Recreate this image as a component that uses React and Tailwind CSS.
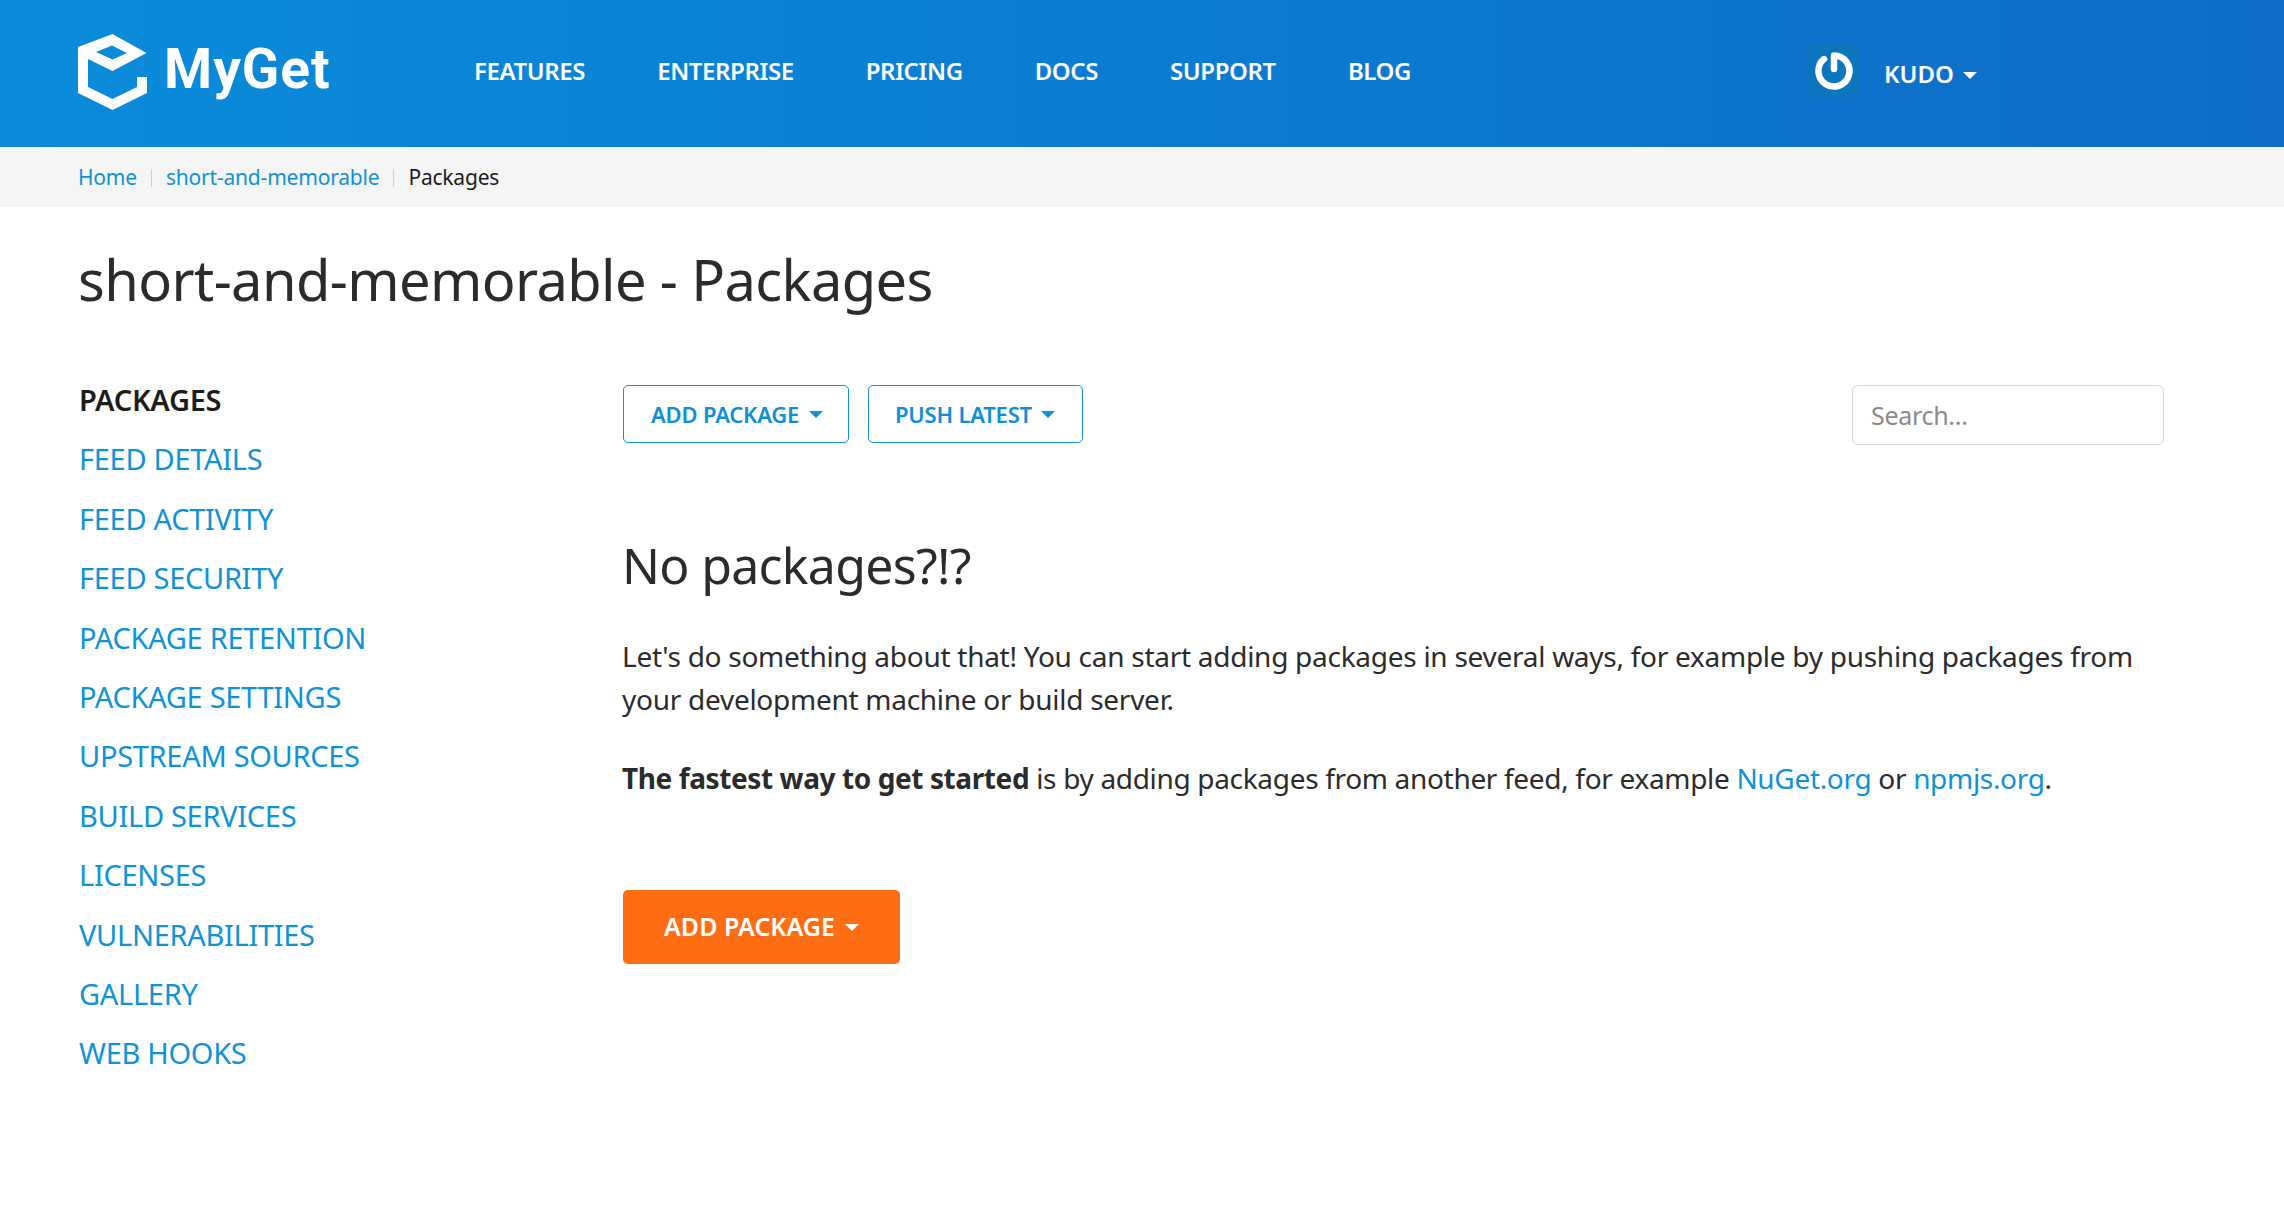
const font = { fontFamily: '"Noto Sans", sans-serif' };

const navItems = ['FEATURES', 'ENTERPRISE', 'PRICING', 'DOCS', 'SUPPORT', 'BLOG'];
const sideItems = [
  'FEED DETAILS',
  'FEED ACTIVITY',
  'FEED SECURITY',
  'PACKAGE RETENTION',
  'PACKAGE SETTINGS',
  'UPSTREAM SOURCES',
  'BUILD SERVICES',
  'LICENSES',
  'VULNERABILITIES',
  'GALLERY',
  'WEB HOOKS',
];

function Caret({ className }) {
  return <span className={`inline-block w-0 h-0 border-x-[7px] border-x-transparent border-t-[7px] ${className}`} />;
}

function Logo() {
  return (
    <svg width="70" height="77" viewBox="78 34 70 77" className="shrink-0">
      <path
        fill="#fff"
        fillRule="evenodd"
        d="M78 47 L112.5 34 L146.5 53 L112.5 71 L88 59 L88 87 L112.5 99 L137 87 L137 77 L147 77 L147 93 L112.5 110 L78 93 Z M96 52 L112.5 59.500 L127 53 L112 45.500 Z"
      />
    </svg>
  );
}

export default function App() {
  return (
    <div style={font} className="min-h-[1208px] bg-white text-[#2b2b2b]">
      <header className="h-[147px] bg-gradient-to-r from-[#0a8cda] to-[#0e6cc8] flex items-center pl-[78px]">
        <div className="flex items-center gap-[16px] w-[396px] -mt-[2px]">
          <Logo />
          <span style={{ fontFamily: 'Roboto, sans-serif' }} className="text-[55px] leading-none font-bold text-white tracking-[1px] -mt-[6px]">MyGet</span>
        </div>
        <nav className="flex items-center gap-[72px] -mt-[6px] w-[1333px]">
          {navItems.map((item) => (
            <a key={item} className="text-[24px] font-semibold text-white tracking-[-0.4px]">{item}</a>
          ))}
        </nav>
        <div className="flex items-center gap-[24px]">
          <div className="w-[53px] h-[53px] rounded-[6px] bg-[#0c76bd] flex items-center justify-center -mt-[6px]">
            <svg width="42" height="42" viewBox="0 0 42 42" fill="none" stroke="#fff" strokeWidth="6.500" strokeLinecap="round" strokeLinejoin="round">
              <path d="M11 9.100 A15.500 15.500 0 1 0 21 5.500 V19" />
            </svg>
          </div>
          <div className="flex items-center gap-[9px] text-[24px] font-semibold text-white">
            KUDO
            <Caret className="border-t-white mt-[4px]" />
          </div>
        </div>
      </header>

      <div className="h-[60px] pt-[2px] bg-[#f5f5f5] flex items-center pl-[78px] text-[21px] tracking-[-0.2px] text-[#1c1c1c]">
        <a className="text-[#0f93d6]">Home</a>
        <span className="w-px h-[18px] bg-[#cfcfcf] mx-[14px]" />
        <a className="text-[#0f93d6]">short-and-memorable</a>
        <span className="w-px h-[18px] bg-[#cfcfcf] mx-[14px]" />
        <span>Packages</span>
      </div>

      <h1 className="pl-[78px] mt-[36px] text-[56px] leading-[72px] font-normal tracking-[-0.6px]">short-and-memorable - Packages</h1>

      <div className="flex pl-[79px] pr-[120px] mt-[70px]">
        <aside className="w-[544px] shrink-0 flex flex-col text-[29px] leading-[59.400px] tracking-[-0.3px] -mt-[15px]">
          <span className="font-semibold text-[#1c1c1c]">PACKAGES</span>
          {sideItems.map((item) => (
            <a key={item} className="text-[#0f93d6]">{item}</a>
          ))}
        </aside>

        <main className="flex-1 min-w-0">
          <div className="flex items-start">
            <button className="h-[58px] pl-[27px] w-[226px] flex items-center gap-[10px] whitespace-nowrap border border-[#1590d0] rounded-[5px] text-[22px] font-semibold text-[#0f8fd4] tracking-[-0.2px]">
              ADD PACKAGE
              <Caret className="border-t-[#0f8fd4]" />
            </button>
            <button className="h-[58px] ml-[19px] pl-[26px] w-[215px] flex items-center gap-[9px] whitespace-nowrap border border-[#1590d0] rounded-[5px] text-[22px] font-semibold text-[#0f8fd4] tracking-[-0.2px]">
              PUSH LATEST
              <Caret className="border-t-[#0f8fd4]" />
            </button>
            <input
              placeholder="Search..."
              style={font}
              className="ml-auto w-[312px] h-[60px] px-[18px] border border-[#d6d6d6] rounded-[6px] text-[25px] tracking-[-0.3px] placeholder:text-[#8a8a8a]"
            />
          </div>

          <h2 className="mt-[88px] -ml-[1px] text-[50px] leading-[64px] font-normal tracking-[-0.7px]">No packages?!?</h2>
          <p className="mt-[38px] -ml-[1px] text-[28px] leading-[43px] tracking-[-0.27px]">
            Let's do something about that! You can start adding packages in several ways, for example by pushing packages from your development machine or build server.
          </p>
          <p className="mt-[36px] -ml-[1px] text-[28px] leading-[43px] tracking-[-0.32px]">
            <strong className="font-bold tracking-[-0.4px]">The fastest way to get started</strong> is by adding packages from another feed, for example{' '}
            <a className="text-[#0f93d6]">NuGet.org</a> or <a className="text-[#0f93d6]">npmjs.org</a>.
          </p>
          <button className="mt-[90px] h-[74px] w-[277px] flex items-center justify-center gap-[10px] rounded-[5px] bg-[#ff6d12] text-[25px] font-semibold text-white">
            ADD PACKAGE
            <Caret className="border-t-white" />
          </button>
        </main>
      </div>
    </div>
  );
}
